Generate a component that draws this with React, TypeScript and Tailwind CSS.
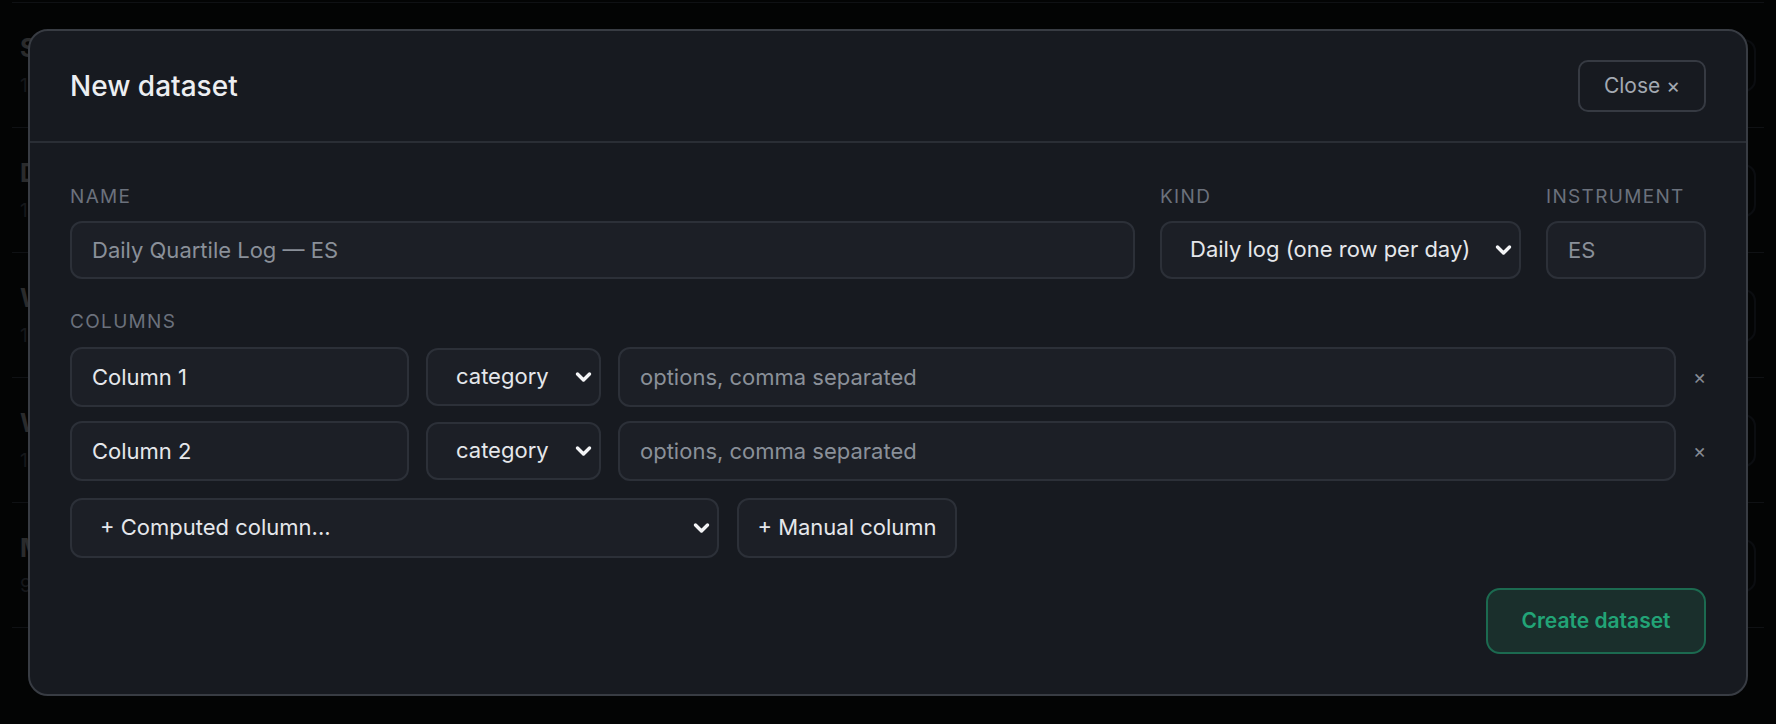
import { X } from "lucide-react";

type Dataset = { title: string; rows: string };

const datasets: Dataset[] = [
    { title: "Session Stats", rows: "12 columns · 184 rows" },
    { title: "Daily Quartile Log — NQ", rows: "14 columns · 212 rows" },
    { title: "Weekly Review", rows: "11 columns · 38 rows" },
    { title: "Weekly Levels", rows: "10 columns · 41 rows" },
    { title: "Manual Trade Journal", rows: "9 columns · 96 rows" },
];

const inputBase =
    "rounded-[12px] border-2 border-[#2c3038] bg-[#1c1f26] text-[22px] text-[#e5e7eb] placeholder:text-[#8a9099] outline-none";

const Chevron = () => (
    <svg
        width="17"
        height="11"
        viewBox="0 0 17 11"
        className="pointer-events-none absolute right-[9px] top-1/2 -translate-y-1/2"
    >
        <path
            d="M2.5 2.5l6 6 6-6"
            fill="none"
            stroke="#f3f4f6"
            strokeWidth="3.4"
            strokeLinecap="round"
            strokeLinejoin="round"
        />
    </svg>
);

const Select = ({ value, className }: { value: string; className: string }) => (
    <div className={"relative shrink-0 " + className}>
        <select
            defaultValue={value}
            className={inputBase + " h-full w-full appearance-none pl-[28px] pr-[40px]"}
        >
            <option>{value}</option>
        </select>
        <Chevron />
    </div>
);

const Label = ({ children }: { children: string }) => (
    <label className="block text-[19px] leading-[28px] tracking-[0.07em] uppercase text-[#6b717c]">
        {children}
    </label>
);

const ColumnRow = ({ name }: { name: string }) => (
    <div className="flex items-center gap-[17px]">
        <input
            defaultValue={name}
            className={inputBase + " h-[60px] w-[339px] shrink-0 px-5"}
        />
        <Select value="category" className="h-[58px] w-[175px]" />
        <input
            placeholder="options, comma separated"
            className={inputBase + " h-[60px] min-w-0 flex-1 px-5"}
        />
        <button className="w-[13px] text-[20px] leading-none text-[#858b94]">×</button>
    </div>
);

export default function App() {
    return (
        <div className="min-h-screen bg-[#111418] px-3 pt-[2px] font-['Inter','Noto_Sans',sans-serif]">
            {/* dataset list underneath the dialog */}
            <ul className="border-t border-[#4b5563]">
                {datasets.map((d) => (
                    <li
                        key={d.title}
                        className="flex h-[125px] items-center justify-between border-b border-[#4b5563] px-2"
                    >
                        <div className="flex flex-col gap-[10px]">
                            <h3 className="text-[25px] leading-[32px] font-bold text-[#d1d5db]">{d.title}</h3>
                            <p className="text-[19px] leading-[24px] text-[#6b7280]">{d.rows}</p>
                        </div>
                        <button className="h-[53px] rounded-[12px] border-2 border-[#374151] px-6 text-[20px] text-[#d1d5db]">
                            Open
                        </button>
                    </li>
                ))}
            </ul>

            <div className="fixed inset-0 flex items-center justify-center bg-black/80 p-7">
                <div className="w-full rounded-[20px] border-2 border-[#383c43] bg-[#171a20]">
                    <header className="flex items-center justify-between border-b-2 border-[#2a2e35] px-10 py-[29px]">
                        <h2 className="text-[28px] font-medium text-[#eceef1]">New dataset</h2>
                        <button className="flex h-[52px] w-[128px] items-center justify-center rounded-[10px] border-2 border-[#363a42] text-[21px] text-[#a3a9b2]">
                            Close ×
                        </button>
                    </header>

                    <div className="px-10 py-10">
                        <div className="grid grid-cols-[1fr_361px_160px] gap-x-[25px]">
                            <div className="flex flex-col gap-[10px]">
                                <Label>Name</Label>
                                <input
                                    placeholder="Daily Quartile Log — ES"
                                    className={inputBase + " h-[58px] px-5"}
                                />
                            </div>
                            <div className="flex flex-col gap-[10px]">
                                <Label>Kind</Label>
                                <Select value="Daily log (one row per day)" className="h-[58px] w-full" />
                            </div>
                            <div className="flex flex-col gap-[10px]">
                                <Label>Instrument</Label>
                                <input placeholder="ES" className={inputBase + " h-[58px] w-full px-5"} />
                            </div>
                        </div>

                        <div className="mt-[29px]">
                            <Label>Columns</Label>
                            <div className="mt-[11px] flex flex-col gap-[14px]">
                                <ColumnRow name="Column 1" />
                                <ColumnRow name="Column 2" />
                            </div>
                            <div className="mt-[17px] flex items-center gap-[18px]">
                                <Select value="+ Computed column..." className="h-[60px] w-[649px]" />
                                <button className="h-[60px] w-[220px] rounded-[12px] border-2 border-[#2c3038] bg-[#1c1f26] text-[22px] text-[#e5e7eb]">
                                    + Manual column
                                </button>
                            </div>
                        </div>

                        <div className="mt-[30px] flex justify-end">
                            <button className="h-[66px] w-[220px] rounded-[14px] border-2 border-[#1c6a50] bg-[#1a2f2c] text-[21px] font-semibold text-[#22a477]">
                                Create dataset
                            </button>
                        </div>
                    </div>
                </div>
            </div>
        </div>
    );
}
